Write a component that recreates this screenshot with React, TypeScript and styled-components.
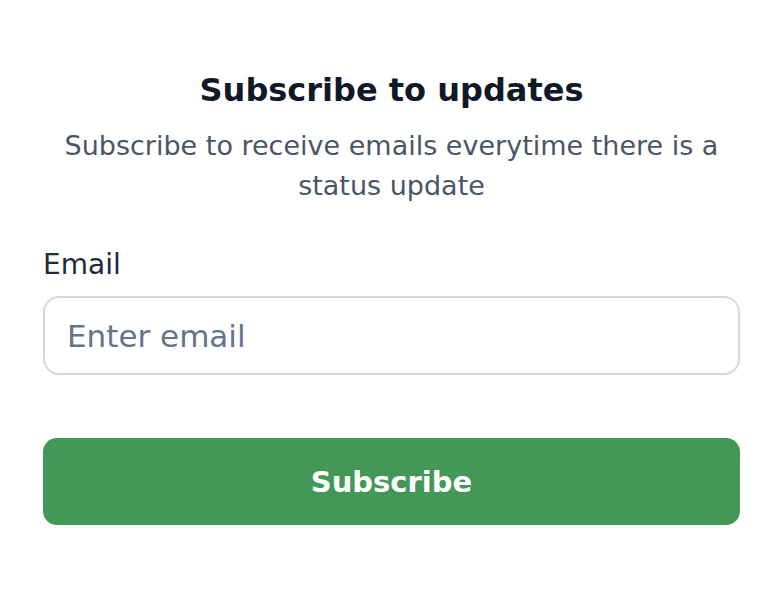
import React from "react";
import styled, { createGlobalStyle } from "styled-components";

const Global = createGlobalStyle`
  html, body { margin: 0; padding: 0; background: #ffffff; }
  body { font-family: "DejaVu Sans", "Noto Sans", sans-serif; }
  * { box-sizing: border-box; }
`;

const Page = styled.main`
  width: 779px;
  height: 606px;
  padding: 66px 39px 0 43px;
  display: flex;
  flex-direction: column;
`;

const Header = styled.header`
  display: flex;
  flex-direction: column;
  align-items: center;
  text-align: center;
`;

const Title = styled.h1`
  margin: 0;
  font-size: 32px;
  line-height: 48px;
  font-weight: 700;
  color: #111827;
`;

const Subtitle = styled.p`
  margin: 12px 0 0;
  font-size: 27px;
  line-height: 40px;
  font-weight: 400;
  color: #4a5568;
  padding: 0 8px;
`;

const Field = styled.div`
  margin-top: 42px;
  display: flex;
  flex-direction: column;
  gap: 14px;
`;

const Label = styled.label`
  font-size: 28px;
  line-height: 34px;
  color: #1e293b;
`;

const Input = styled.input`
  height: 79px;
  width: 100%;
  border: 2px solid #d5d8e0;
  border-radius: 16px;
  padding: 0 22px;
  font-family: inherit;
  font-size: 31px;
  color: #111827;
  outline: none;
  &::placeholder { color: #64748b; }
`;

const Button = styled.button`
  margin-top: 63px;
  height: 87px;
  width: 100%;
  border: none;
  border-radius: 14px;
  background: #439858;
  color: #ffffff;
  font-family: inherit;
  font-size: 29px;
  font-weight: 700;
  cursor: pointer;
`;

export default function App() {
  return (
    <>
      <Global />
      <Page>
        <Header>
          <Title>Subscribe to updates</Title>
          <Subtitle>Subscribe to receive emails everytime there is a status update</Subtitle>
        </Header>
        <Field>
          <Label htmlFor="email">Email</Label>
          <Input id="email" type="email" placeholder="Enter email" />
        </Field>
        <Button type="button">Subscribe</Button>
      </Page>
    </>
  );
}
